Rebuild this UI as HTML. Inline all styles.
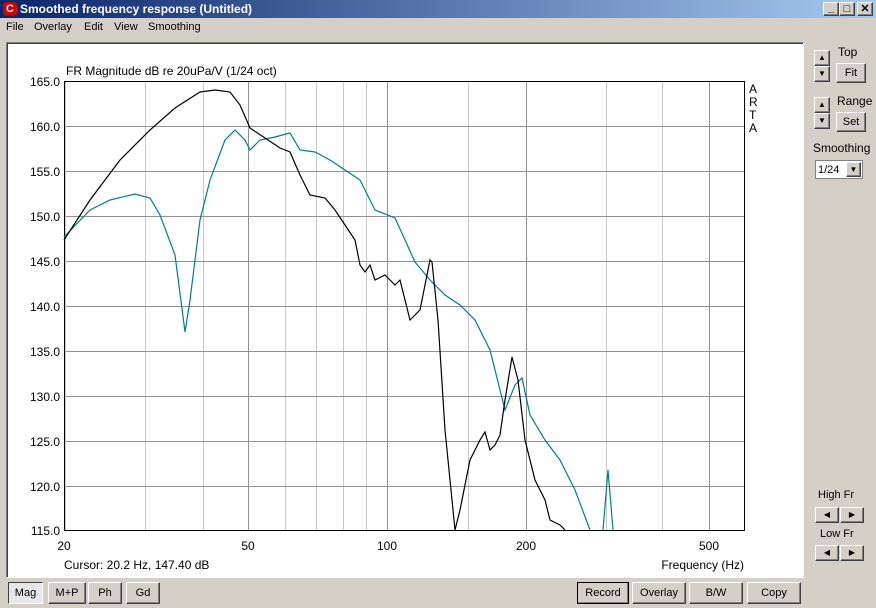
<!DOCTYPE html><html><head><style>
body{margin:0;width:876px;height:608px;background:#d4d0c8;font-family:"Liberation Sans",sans-serif;font-size:11px;position:relative;overflow:hidden}
.t{position:absolute;left:0;top:0;width:876px;height:18px;background:linear-gradient(90deg,#0a246a,#a6caf0);color:#fff;font-weight:bold;font-size:12px}
.b{position:absolute;background:#d4d0c8;border:1px solid;border-color:#fff #404040 #404040 #fff;box-shadow:inset -1px -1px #808080;text-align:center;font-size:11px;box-sizing:border-box}
.a{position:absolute;font-size:11px}
</style></head><body>
<div class="t"><div style="position:absolute;left:3px;top:2px;width:14px;height:14px;background:#c00;border-radius:3px;color:#fff;font-size:11px;line-height:14px;text-align:center">C</div><span style="position:absolute;left:20px;top:2px">Smoothed frequency response (Untitled)</span>
<div class="b" style="left:823px;top:2px;width:16px;height:14px;color:#000;line-height:10px">_</div><div class="b" style="left:839px;top:2px;width:16px;height:14px;color:#000;line-height:12px">□</div><div class="b" style="left:857px;top:2px;width:16px;height:14px;color:#000;line-height:12px">✕</div></div>
<div class="a" style="left:6px;top:21px">File</div><div class="a" style="left:34px;top:21px">Overlay</div><div class="a" style="left:84px;top:21px">Edit</div><div class="a" style="left:114px;top:21px">View</div><div class="a" style="left:148px;top:21px">Smoothing</div>
<div style="position:absolute;left:6px;top:42px;width:796px;height:534px;background:#fff;border:1px solid;border-color:#808080 #fff #fff #808080;box-shadow:inset 1px 1px #404040"></div>
<svg style="position:absolute;left:0;top:0" width="876" height="608">
<g stroke="#c8c8c8" stroke-width="1">
<line x1="145.5" y1="82" x2="145.5" y2="530"/><line x1="203.5" y1="82" x2="203.5" y2="530"/><line x1="285.5" y1="82" x2="285.5" y2="530"/><line x1="316.5" y1="82" x2="316.5" y2="530"/><line x1="343.5" y1="82" x2="343.5" y2="530"/><line x1="366.5" y1="82" x2="366.5" y2="530"/><line x1="468.5" y1="82" x2="468.5" y2="530"/><line x1="606.5" y1="82" x2="606.5" y2="530"/><line x1="662.5" y1="82" x2="662.5" y2="530"/>
</g>
<g stroke="#909090" stroke-width="1">
<line x1="248.5" y1="82" x2="248.5" y2="530"/><line x1="387.5" y1="82" x2="387.5" y2="530"/><line x1="526.5" y1="82" x2="526.5" y2="530"/><line x1="709.5" y1="82" x2="709.5" y2="530"/>
<line x1="64" y1="126.5" x2="744" y2="126.5"/><line x1="64" y1="171.5" x2="744" y2="171.5"/><line x1="64" y1="216.5" x2="744" y2="216.5"/><line x1="64" y1="261.5" x2="744" y2="261.5"/><line x1="64" y1="306.5" x2="744" y2="306.5"/><line x1="64" y1="351.5" x2="744" y2="351.5"/><line x1="64" y1="396.5" x2="744" y2="396.5"/><line x1="64" y1="441.5" x2="744" y2="441.5"/><line x1="64" y1="486.5" x2="744" y2="486.5"/>
</g>
<line x1="65.5" y1="82" x2="65.5" y2="530" stroke="#e0e000"/>
<rect x="64.5" y="81.5" width="680" height="449" fill="none" stroke="#000"/>
<g fill="none" stroke-width="1.2">
<polyline stroke="#008080" points="64,237 90,210 110,200 135,194 150,198 160,215 175,255 185,332 190,300 200,220 210,180 225,140 235,130 245,140 250,150 260,140 275,137 290,133 300,150 315,152 330,160 345,170 360,180 375,210 395,218 405,240 415,262 430,280 445,295 460,305 475,320 490,350 505,410 515,385 522,378 530,415 545,440 560,460 575,490 590,530"/>
<polyline stroke="#008080" points="603,530 608,470 613,530"/>
<polyline stroke="#000" points="64,240 90,200 120,160 150,130 175,108 200,92 215,90 230,92 240,105 250,128 265,138 280,148 290,152 300,175 310,195 325,198 335,210 345,225 355,240 360,265 365,272 370,265 375,280 385,275 395,285 400,280 405,300 410,320 420,310 430,260 432,262 438,320 445,430 455,530 460,510 470,460 480,440 485,432 490,450 495,445 500,435 505,400 512,357 518,380 525,440 535,480 545,500 550,520 560,525 565,530"/>
</g>
<g font-family="Liberation Sans,sans-serif" font-size="12" fill="#000">
<text x="66" y="75">FR Magnitude dB re 20uPa/V (1/24 oct)</text>
<g text-anchor="end"><text x="60" y="86">165.0</text><text x="60" y="131">160.0</text><text x="60" y="176">155.0</text><text x="60" y="221">150.0</text><text x="60" y="266">145.0</text><text x="60" y="311">140.0</text><text x="60" y="356">135.0</text><text x="60" y="401">130.0</text><text x="60" y="446">125.0</text><text x="60" y="491">120.0</text><text x="60" y="535">115.0</text></g>
<g text-anchor="middle"><text x="64" y="550">20</text><text x="248" y="550">50</text><text x="387" y="550">100</text><text x="526" y="550">200</text><text x="709" y="550">500</text></g>
<text x="64" y="569">Cursor: 20.2 Hz, 147.40 dB</text><text x="744" y="569" text-anchor="end">Frequency (Hz)</text>
<text x="749" y="93">A</text><text x="749" y="106">R</text><text x="749" y="119">T</text><text x="749" y="132">A</text>
<text x="838" y="56">Top</text><text x="837" y="105">Range</text><text x="813" y="152">Smoothing</text>
<text x="818" y="498" font-size="11">High Fr</text><text x="820" y="537" font-size="11">Low Fr</text>
</g>
</svg>
<div class="b" style="left:814px;top:50px;width:16px;height:16px;font-size:8px;line-height:14px">▲</div>
<div class="b" style="left:814px;top:66px;width:16px;height:16px;font-size:8px;line-height:14px">▼</div>
<div class="b" style="left:836px;top:63px;width:30px;height:20px;line-height:18px">Fit</div>
<div class="b" style="left:814px;top:97px;width:16px;height:16px;font-size:8px;line-height:14px">▲</div>
<div class="b" style="left:814px;top:113px;width:16px;height:16px;font-size:8px;line-height:14px">▼</div>
<div class="b" style="left:836px;top:112px;width:30px;height:20px;line-height:18px">Set</div>
<div style="position:absolute;left:815px;top:160px;width:48px;height:19px;background:#fff;border:1px solid #808080;box-sizing:border-box"><span style="position:absolute;left:2px;top:3px">1/24</span><div class="b" style="right:1px;top:1px;width:15px;height:15px;font-size:8px;line-height:13px">▼</div></div>
<div class="b" style="left:815px;top:507px;width:24px;height:16px;font-size:8px;line-height:14px">◀</div><div class="b" style="left:840px;top:507px;width:24px;height:16px;font-size:8px;line-height:14px">▶</div>
<div class="b" style="left:815px;top:545px;width:24px;height:16px;font-size:8px;line-height:14px">◀</div><div class="b" style="left:840px;top:545px;width:24px;height:16px;font-size:8px;line-height:14px">▶</div>
<div class="b" style="left:8px;top:582px;width:35px;height:22px;line-height:20px;background:#e8e8e8;border-color:#404040 #fff #fff #404040;box-shadow:none">Mag</div>
<div class="b" style="left:48px;top:582px;width:38px;height:22px;line-height:20px">M+P</div>
<div class="b" style="left:88px;top:582px;width:34px;height:22px;line-height:20px">Ph</div>
<div class="b" style="left:126px;top:582px;width:34px;height:22px;line-height:20px">Gd</div>
<div class="b" style="left:577px;top:582px;width:52px;height:22px;line-height:20px;border:1px solid #000">Record</div>
<div class="b" style="left:632px;top:582px;width:54px;height:22px;line-height:20px">Overlay</div>
<div class="b" style="left:689px;top:582px;width:54px;height:22px;line-height:20px">B/W</div>
<div class="b" style="left:747px;top:582px;width:54px;height:22px;line-height:20px">Copy</div>
</body></html>
